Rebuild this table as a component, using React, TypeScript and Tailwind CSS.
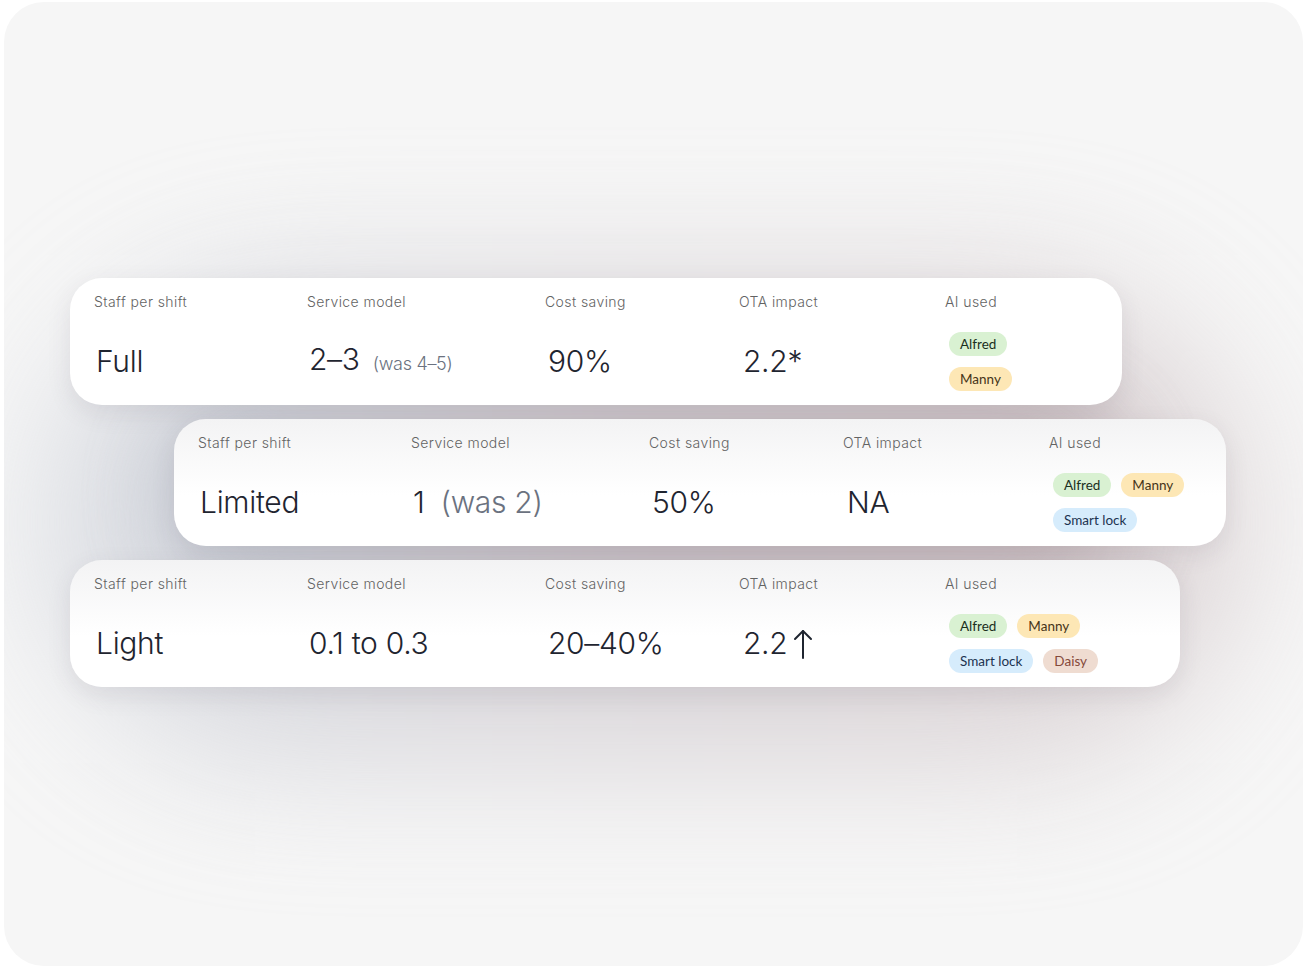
import React from "react"

type Tag = { label: string; tone: "green" | "amber" | "blue" | "rose" }

type Row = {
  staff: string
  service: React.ReactNode
  saving: string
  ota: React.ReactNode
  tags: Tag[][]
  offset: string
  width: string
  tinted: boolean
}

const toneClass: Record<Tag["tone"], string> = {
  green: "bg-[#d9f1d2] text-[#1b2f1d]",
  amber: "bg-[#fde7b5] text-[#463418]",
  blue: "bg-[#d6ecfc] text-[#1c3350]",
  rose: "bg-[#efdcd1] text-[#85493a]",
}

const rows: Row[] = [
  {
    staff: "Full",
    service: (
      <span className="flex items-baseline gap-[13px]">
        <span>2–3</span>
        <span className="text-[18px] text-[#6b7280]">(was 4–5)</span>
      </span>
    ),
    saving: "90%",
    ota: "2.2*",
    tags: [[{ label: "Alfred", tone: "green" }], [{ label: "Manny", tone: "amber" }]],
    offset: "ml-0",
    width: "w-[1052px]",
    tinted: false,
  },
  {
    staff: "Limited",
    service: (
      <span className="flex items-baseline gap-[16px]">
        <span>1</span>
        <span className="text-[#6b7280]">(was 2)</span>
      </span>
    ),
    saving: "50%",
    ota: "NA",
    tags: [
      [
        { label: "Alfred", tone: "green" },
        { label: "Manny", tone: "amber" },
      ],
      [{ label: "Smart lock", tone: "blue" }],
    ],
    offset: "ml-[104px]",
    width: "w-[1052px]",
    tinted: true,
  },
  {
    staff: "Light",
    service: "0.1 to 0.3",
    saving: "20–40%",
    ota: (
      <span className="flex items-center gap-[6px]">
        <span>2.2</span>
        <svg width="20" height="32" viewBox="0 0 20 32" fill="none" stroke="currentColor" strokeWidth="2" strokeLinecap="round" strokeLinejoin="round" className="mt-[2px]">
          <path d="M10 30V3" />
          <path d="M2 11l8-8 8 8" />
        </svg>
      </span>
    ),
    tags: [
      [
        { label: "Alfred", tone: "green" },
        { label: "Manny", tone: "amber" },
      ],
      [
        { label: "Smart lock", tone: "blue" },
        { label: "Daisy", tone: "rose" },
      ],
    ],
    offset: "ml-0",
    width: "w-[1110px]",
    tinted: true,
  },
]

const labels = ["Staff per shift", "Service model", "Cost saving", "OTA impact", "AI used"]

function Pill({ tag }: { tag: Tag }) {
  return (
    <span
      className={`inline-flex h-[24px] items-center rounded-full px-[11px] text-[13.5px] font-normal font-[Lato,sans-serif] ${toneClass[tag.tone]}`}
    >
      {tag.label}
    </span>
  )
}

function Card({ row }: { row: Row }) {
  return (
    <div
      className={`${row.offset} ${row.width} h-[127px] rounded-[32px] pl-[24px] pt-[14px] shadow-[0_8px_24px_rgba(70,60,80,0.10)] ${
        row.tinted ? "bg-linear-to-b from-[#f3f3f4] to-white to-60%" : "bg-white"
      }`}
    >
      <div className="grid grid-cols-[213px_238px_194px_206px_1fr] text-[14px] font-light leading-[20px] tracking-[0.03em] text-[#636363]">
        {labels.map((l) => (
          <span key={l}>{l}</span>
        ))}
      </div>
      <div className="mt-[19px] grid h-[60px] grid-cols-[213px_238px_194px_206px_1fr] items-center text-[30px] font-[350] leading-[36px] tracking-[-0.01em] text-[#1f2530]">
        <span className="pl-[2px]">{row.staff}</span>
        <span className="pl-[2px]">{row.service}</span>
        <span className="pl-[3px]">{row.saving}</span>
        <span className="pl-[4px]">{row.ota}</span>
        <div className="flex flex-col gap-[11px] pl-[4px] tracking-normal">
          {row.tags.map((line, i) => (
            <div key={i} className="flex gap-[10px]">
              {line.map((t) => (
                <Pill key={t.label} tag={t} />
              ))}
            </div>
          ))}
        </div>
      </div>
    </div>
  )
}

export default function App() {
  return (
    <div className="h-[968px] w-full bg-white px-[4px] py-[2px] font-[Inter,sans-serif]">
      <div className="relative h-full overflow-hidden rounded-[40px] bg-[#f6f6f6]">
        {/* soft coloured glow behind the cards */}
        <div className="absolute left-[40px] top-[280px] h-[480px] w-[1200px] rounded-full bg-linear-to-r from-[#ccd1da] via-[#cdc7cc] to-[#d2c6c8] opacity-70 blur-[70px]" />
        <div className="absolute left-[160px] top-[400px] h-[180px] w-[960px] rounded-full bg-linear-to-r from-[#bcc3ce] via-[#b8acb3] to-[#bba9ad] opacity-70 blur-[40px]" />
        <div className="relative flex flex-col gap-[14px] pl-[66px] pt-[276px]">
          {rows.map((r) => (
            <Card key={r.staff} row={r} />
          ))}
        </div>
      </div>
    </div>
  )
}
